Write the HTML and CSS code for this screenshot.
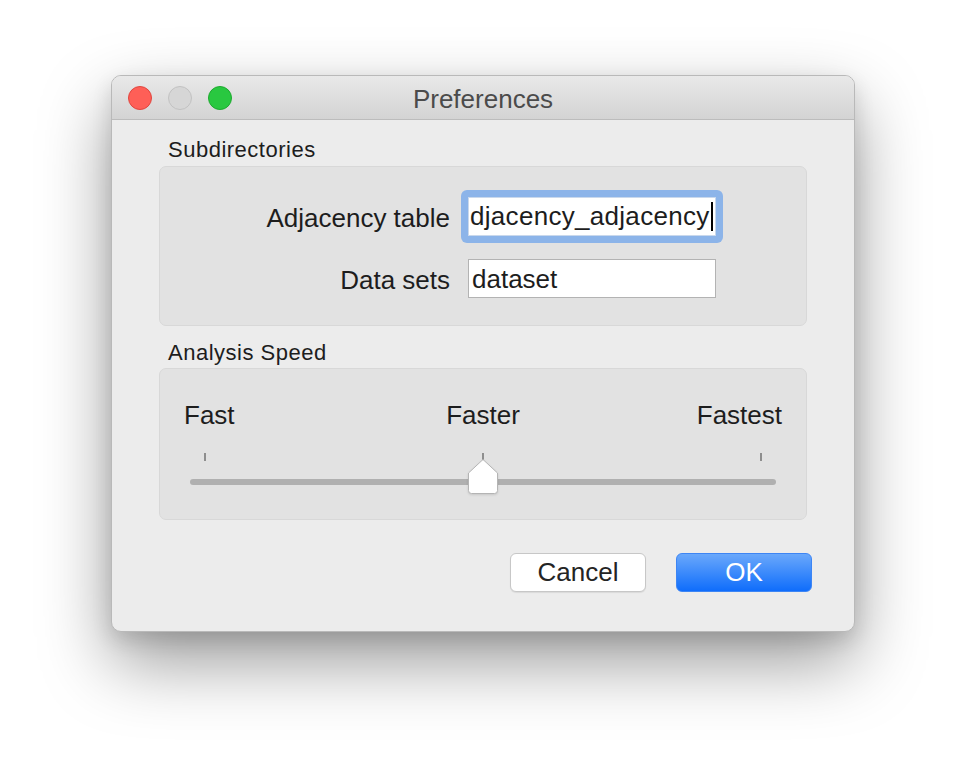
FILE: index.html
```html
<!DOCTYPE html>
<html>
  <head>
    <meta charset="utf-8">
    <title>Preferences</title>
    <link rel="stylesheet" href="styles.css">
  </head>

  <body>
    <div class="window">
      <div class="titlebar">
        <div class="lights">
          <span class="light close"></span>
          <span class="light minimize"></span>
          <span class="light zoom"></span>
        </div>
        <div class="title">Preferences</div>
        <div></div>
      </div>

      <div class="content">
        <div class="caption">Subdirectories</div>
        <div class="group dirs">
          <label class="field-label">Adjacency table</label>
          <div class="focus-ring">
            <div class="field focused">djacency_adjacency<span class="caret"></span></div>
          </div>

          <label class="field-label">Data sets</label>
          <div class="field">dataset</div>
        </div>

        <div class="caption second">Analysis Speed</div>
        <div class="group speed">
          <div class="speed-labels">
            <span class="first">Fast</span>
            <span>Faster</span>
            <span class="last">Fastest</span>
          </div>
          <div class="slider">
            <div class="ticks">
              <span class="tick"></span>
              <span class="tick"></span>
              <span class="tick"></span>
            </div>
            <div class="track"></div>
            <svg class="thumb" width="32" height="37" viewBox="0 0 32 37">
              <path d="M16 1.5 L30.5 15 V32.5 a3 3 0 0 1 -3 3 H4.5 a3 3 0 0 1 -3 -3 V15 Z"
                    fill="#ffffff" stroke="#b4b4b4" stroke-width="1"/>
            </svg>
          </div>
        </div>

        <div class="buttons">
          <button class="btn cancel">Cancel</button>
          <button class="btn ok">OK</button>
        </div>
      </div>
    </div>
  </body>
</html>
```

FILE: styles.css
```css
html, body {
  height: 100%;
}

body {
  margin: 0;
  background: #ffffff;
  font-family: "Liberation Sans", Arial, sans-serif;
  color: #1d1d1d;
  overflow: hidden;
}

.window {
  width: 744px;
  margin: 75px 0 0 111px;
  box-sizing: border-box;
  border: 1px solid #b9b9b9;
  border-radius: 10px;
  overflow: hidden;
  background: #ececec;
  box-shadow: 0 30px 70px rgba(0, 0, 0, 0.4), 0 8px 20px rgba(0, 0, 0, 0.12);
}

.titlebar {
  height: 43px;
  display: grid;
  grid-template-columns: 1fr auto 1fr;
  align-items: center;
  background: linear-gradient(#e9e9e9, #d3d3d3);
  border-bottom: 1px solid #bcbcbc;
}

.lights {
  display: flex;
  gap: 16px;
  padding-left: 16px;
}

.light {
  width: 22px;
  height: 22px;
  border-radius: 50%;
  border: 1px solid;
}
.light.close {
  background: #fe5f57;
  border-color: #e0463f;
}
.light.minimize {
  background: #d6d6d6;
  border-color: #c2c2c2;
}
.light.zoom {
  background: #29c840;
  border-color: #1eaa2f;
}

.title {
  font-size: 26px;
  color: #4b4b4b;
  padding-top: 4px;
}

.content {
  padding: 17px 47px 39px;
}

.caption {
  font-size: 22px;
  line-height: 26px;
  letter-spacing: 0.5px;
  padding-left: 9px;
  margin-bottom: 3px;
}
.caption.second {
  margin-top: 14px;
  margin-bottom: 2px;
}

.group {
  background: #e2e2e2;
  border: 1px solid #d8d8d8;
  border-radius: 7px;
}

.dirs {
  display: grid;
  grid-template-columns: 1fr 248px;
  column-gap: 18px;
  row-gap: 23px;
  align-items: center;
  padding: 30px 90px 27px 0;
}

.field-label {
  font-size: 26px;
  text-align: right;
  padding-top: 3px;
}

.field {
  height: 39px;
  box-sizing: border-box;
  border: 1px solid #b3b3b3;
  background: #ffffff;
  font-size: 26px;
  line-height: 39px;
  padding: 0 3px;
  white-space: nowrap;
  overflow: hidden;
}

.focus-ring {
  margin: -7px;
  padding: 7px;
  border-radius: 6px;
  background: #8cb4e9;
}
.focus-ring .field {
  border-color: #c9d8ec;
}

.field.focused {
  display: flex;
  align-items: center;
  letter-spacing: 0.3px;
  padding-left: 1px;
}

.caret {
  flex: none;
  width: 2px;
  height: 29px;
  margin-left: 1px;
  background: #000000;
}

.speed {
  padding: 31px 24px 25px;
}

.speed-labels {
  display: grid;
  grid-template-columns: 1fr auto 1fr;
  font-size: 26px;
  line-height: 30px;
}
.speed-labels .first {
  justify-self: start;
}
.speed-labels .last {
  justify-self: end;
}

.slider {
  position: relative;
  margin: 23px 6px 0;
  height: 41px;
}

.ticks {
  display: flex;
  justify-content: space-between;
  padding: 0 14px;
  height: 8px;
}
.tick {
  width: 2px;
  background: #8e8e8e;
}

.track {
  height: 6px;
  margin-top: 18px;
  border-radius: 3px;
  background: #b0b0b0;
}

.thumb {
  position: absolute;
  left: 50%;
  top: 5px;
  margin-left: -16px;
  filter: drop-shadow(0 1px 1px rgba(0, 0, 0, 0.12));
}

.buttons {
  display: flex;
  justify-content: flex-end;
  gap: 30px;
  margin: 33px -5px 0 0;
}

.btn {
  width: 136px;
  height: 39px;
  border-radius: 6px;
  font-family: "Liberation Sans", Arial, sans-serif;
  font-size: 26px;
  padding: 0;
}
.btn.cancel {
  background: #ffffff;
  color: #242424;
  border: 1px solid #c7c7c7;
  box-shadow: 0 1px 1px rgba(0, 0, 0, 0.08);
}
.btn.ok {
  background: linear-gradient(#6aa8fb, #0f6dfb);
  color: #ffffff;
  border: 1px solid #3d85f4;
}
```
